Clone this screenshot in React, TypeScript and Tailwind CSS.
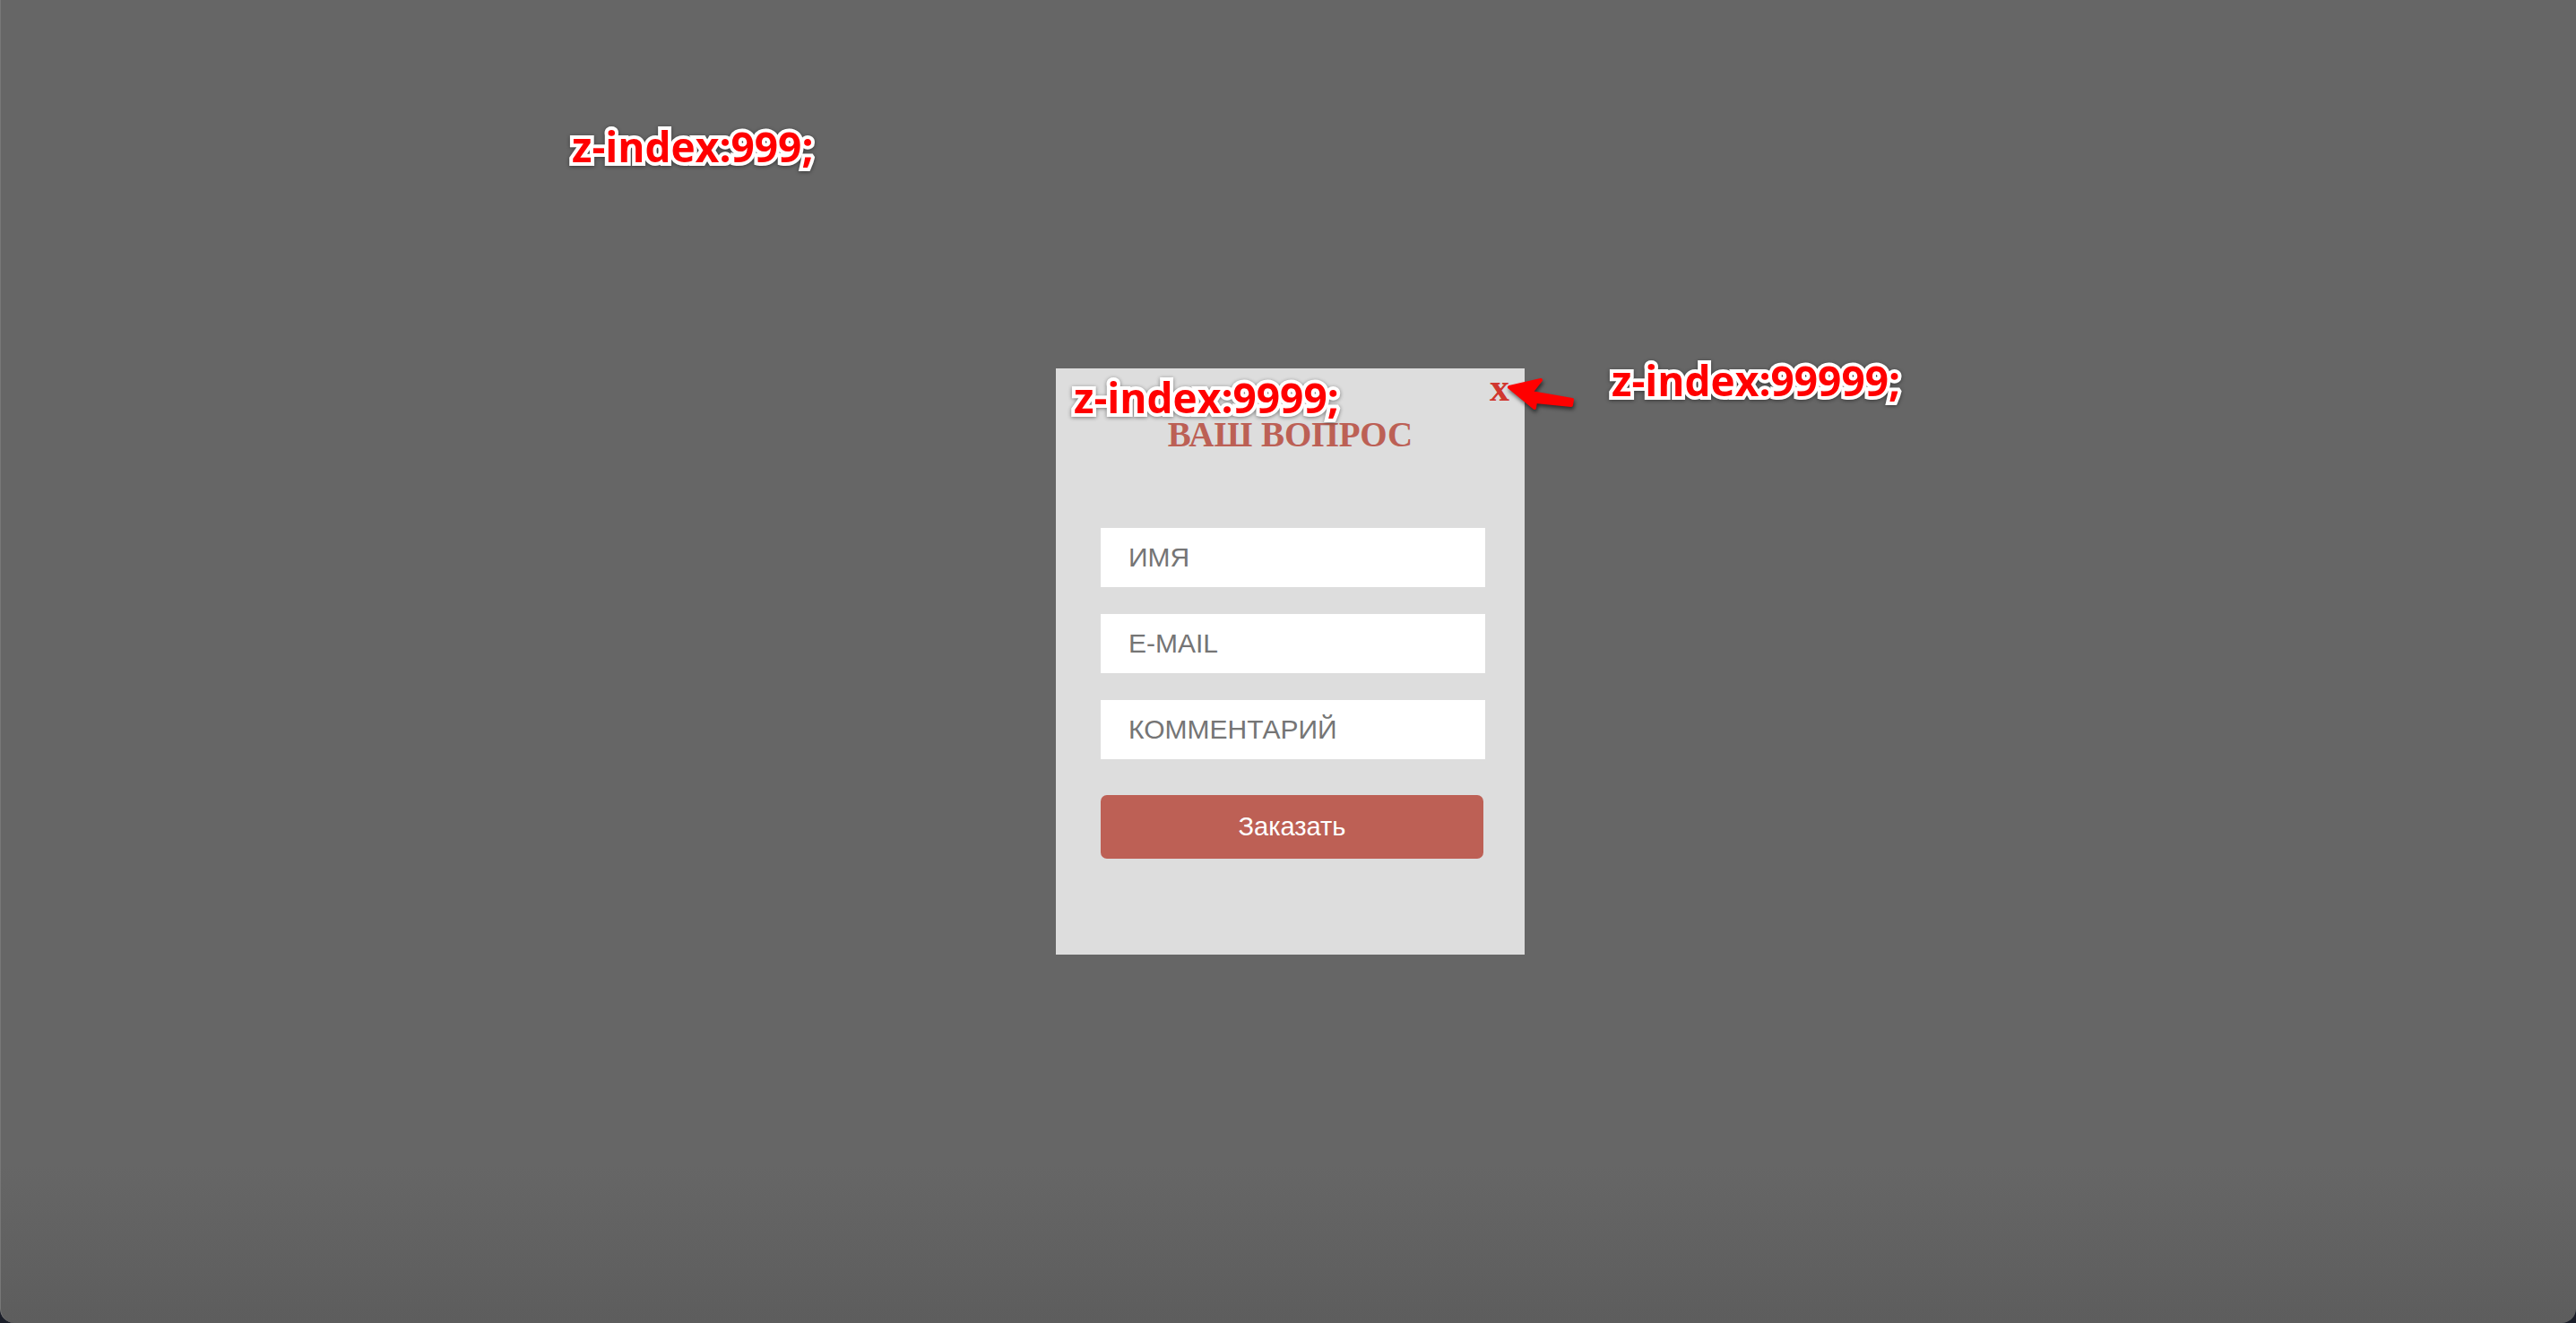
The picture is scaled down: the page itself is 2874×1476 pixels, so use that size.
import React from "react";

const labelCls =
  "absolute whitespace-nowrap font-['Open_Sans',sans-serif] font-bold text-[46px] leading-none text-[#ff0000] [paint-order:stroke_fill] [-webkit-text-stroke:8px_#ffffff] [filter:drop-shadow(0_1px_2px_rgba(0,0,0,0.45))] tracking-[0px]";

const inputCls =
  "w-[429px] h-[66px] bg-white pl-[31px] font-['Liberation_Sans',Arial,sans-serif] text-[30px] text-[#555] placeholder:text-[#757575] outline-none";

export default function App() {
  return (
    <div className="w-[2874px] h-[1476px] bg-[#1b1e29] overflow-hidden">
      <div className="relative w-full h-full rounded-b-[16px] border-l border-[#777777] bg-[linear-gradient(to_bottom,#666666_88%,#5d5d5d)] flex items-center justify-center pl-[4px]">
        <div className="relative w-[523px] h-[654px] bg-[#dddddd] pt-[51px]">
          <button
            type="button"
            className="absolute top-0 right-[17px] font-['Liberation_Serif',serif] font-bold text-[44px] leading-none text-[#d0372f]"
          >
            x
          </button>
          <h2 className="text-center font-['Liberation_Serif',serif] font-bold text-[39px] leading-[46px] text-[#bc6055]">
            ВАШ ВОПРОС
          </h2>
          <form className="mt-[81px] pl-[50px] flex flex-col gap-[30px]">
            <input placeholder="ИМЯ" className={inputCls} />
            <input placeholder="E-MAIL" className={inputCls} />
            <input placeholder="КОММЕНТАРИЙ" className={inputCls} />
            <button
              type="button"
              className="mt-[10px] w-[427px] h-[71px] rounded-[7px] bg-[#bd6055] text-white font-['Liberation_Sans',Arial,sans-serif] text-[29px]"
            >
              Заказать
            </button>
          </form>
        </div>

        <div className={labelCls + " left-[637px] top-[140px]"}>z-index:999;</div>
        <div className={labelCls + " left-[1197px] top-[420px]"}>z-index:9999;</div>
        <div className={labelCls + " left-[1797px] top-[401px]"}>z-index:99999;</div>

        <svg
          className="absolute left-[1675px] top-[415px] [filter:drop-shadow(1px_3px_2px_rgba(0,0,0,0.55))]"
          width="90"
          height="50"
          viewBox="0 0 90 50"
        >
          <path
            d="M8,17 L43,9 L32,23 L78,31 L77,37 L37,33 L36,40 Z"
            fill="#ff0000"
            stroke="#ff0000"
            strokeWidth="4"
            strokeLinejoin="round"
          />
        </svg>
      </div>
    </div>
  );
}
